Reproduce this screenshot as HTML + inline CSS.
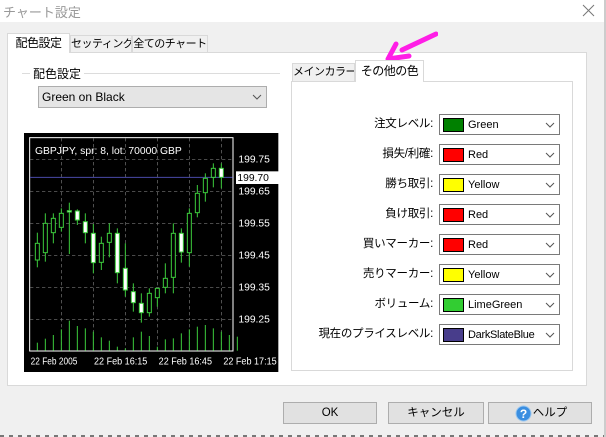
<!DOCTYPE html>
<html><head><meta charset="utf-8"><style>
*{margin:0;padding:0;box-sizing:border-box}
body{width:606px;height:437px;overflow:hidden;background:#f0f0f0;font-family:"Liberation Sans","Noto Sans CJK JP",sans-serif;font-size:12px;color:#000;position:relative}
.a{position:absolute;white-space:nowrap}
.tab{position:absolute;border:1px solid #d9d9d9;border-bottom:none;background:#f0f0f0;text-align:center;font-size:11px;line-height:18px;white-space:nowrap;overflow:hidden;letter-spacing:-0.5px}
.sel{background:#fff;z-index:2}
.lbl{position:absolute;right:173px;width:200px;text-align:right;font-size:11.5px;line-height:20px;white-space:nowrap;letter-spacing:-0.3px}
.cb{position:absolute;left:439px;width:121px;height:21px;border:1px solid #7a7a7a;background:#fff}
.cb .sw{position:absolute;left:3px;top:3px;width:21px;height:14px;border:1px solid #000}
.cb .t{position:absolute;left:28px;top:2px;font-size:11px;line-height:16px;white-space:nowrap}
.cb .ar{position:absolute;right:4px;top:5px;width:10px;height:10px}
.btn{position:absolute;top:402px;height:22px;background:#e1e1e1;border:1px solid #adadad;text-align:center;line-height:20px;font-size:11.5px;white-space:nowrap}
</style></head><body>
<div class="a" style="left:0;top:0;width:604px;height:22px;background:#fff"></div>
<div class="a" style="left:3px;top:2px;font-size:13px;color:#999">チャート設定</div>
<svg class="a" style="left:582px;top:4px" width="14" height="14"><path d="M1 1L12 12M12 1L1 12" stroke="#777" stroke-width="1"/></svg>
<div class="a" style="left:604px;top:0;width:2px;height:437px;background:#ccc"></div>

<div class="a" style="left:7px;top:52px;width:580px;height:334px;background:#fff;border:1px solid #d9d9d9"></div>
<div class="tab sel" style="left:7px;top:33px;width:63px;height:20px;font-size:12px">配色設定</div>
<div class="tab" style="left:70px;top:35px;width:62px;height:17px;line-height:16px">セッティング</div>
<div class="tab" style="left:132px;top:35px;width:76px;height:17px;line-height:16px">全てのチャート</div>

<div class="a" style="left:22px;top:73px;width:258px;height:1px;background:#dcdcdc"></div>
<div class="a" style="left:30px;top:65px;background:#fff;padding:0 3px;font-size:12px">配色設定</div>
<div class="a" style="left:38px;top:86px;width:229px;height:22px;background:#e5e5e5;border:1px solid #adadad;font-size:12px;line-height:20px;padding-left:3px">Green on Black</div>
<svg class="a" style="left:252px;top:93px" width="10" height="8"><path d="M1 2L5 6L9 2" stroke="#555" fill="none"/></svg>

<svg class="a" style="left:20px;top:130px" width="260" height="245" viewBox="0 0 780 735">
<rect x="12" y="9" width="763" height="717" fill="#000"/>
<rect x="29" y="23" width="610" height="640" fill="none" stroke="#fff" stroke-width="3"/>
<g stroke="#777" stroke-width="2" stroke-dasharray="10 8">
<line x1="30" y1="88" x2="638" y2="88"/><line x1="30" y1="184" x2="638" y2="184"/><line x1="30" y1="280" x2="638" y2="280"/><line x1="30" y1="376" x2="638" y2="376"/><line x1="30" y1="472" x2="638" y2="472"/><line x1="30" y1="568" x2="638" y2="568"/>
<line x1="124" y1="24" x2="124" y2="662"/><line x1="220" y1="24" x2="220" y2="662"/><line x1="316" y1="24" x2="316" y2="662"/><line x1="412" y1="24" x2="412" y2="662"/><line x1="508" y1="24" x2="508" y2="662"/><line x1="604" y1="24" x2="604" y2="662"/>
</g>
<line x1="30" y1="142" x2="638" y2="142" stroke="#4a4aa8" stroke-width="3"/>
<g fill="#fff" font-family="Liberation Sans,sans-serif" font-size="31">
<text x="45" y="72">GBPJPY, spr: 8, lot: 70000 GBP</text>
<text x="655" y="98">199.75</text><text x="655" y="194">199.65</text><text x="655" y="290">199.55</text><text x="655" y="386">199.45</text><text x="655" y="482">199.35</text><text x="655" y="578">199.25</text>
<text x="32" y="703" textLength="140" lengthAdjust="spacingAndGlyphs">22 Feb 2005</text><text x="222" y="703" textLength="160" lengthAdjust="spacingAndGlyphs">22 Feb 16:15</text><text x="416" y="703" textLength="160" lengthAdjust="spacingAndGlyphs">22 Feb 16:45</text><text x="610" y="703" textLength="160" lengthAdjust="spacingAndGlyphs">22 Feb 17:15</text>
</g>
<rect x="648" y="124" width="128" height="38" fill="#fff"/>
<text x="652" y="153" font-family="Liberation Sans,sans-serif" font-size="31" fill="#000">199.70</text>
<g stroke="#3ccc3c" stroke-width="3">
<line x1="52" y1="662" x2="52" y2="638"/><line x1="76" y1="662" x2="76" y2="626"/><line x1="100" y1="662" x2="100" y2="615"/><line x1="124" y1="662" x2="124" y2="598"/><line x1="148" y1="662" x2="148" y2="572"/><line x1="172" y1="662" x2="172" y2="588"/><line x1="196" y1="662" x2="196" y2="595"/><line x1="220" y1="662" x2="220" y2="605"/><line x1="244" y1="662" x2="244" y2="622"/><line x1="268" y1="662" x2="268" y2="632"/><line x1="292" y1="662" x2="292" y2="650"/><line x1="316" y1="662" x2="316" y2="655"/><line x1="340" y1="662" x2="340" y2="622"/><line x1="364" y1="662" x2="364" y2="605"/><line x1="388" y1="662" x2="388" y2="618"/><line x1="412" y1="662" x2="412" y2="650"/><line x1="436" y1="662" x2="436" y2="628"/><line x1="460" y1="662" x2="460" y2="625"/><line x1="484" y1="662" x2="484" y2="610"/><line x1="508" y1="662" x2="508" y2="598"/><line x1="532" y1="662" x2="532" y2="590"/><line x1="556" y1="662" x2="556" y2="585"/><line x1="580" y1="662" x2="580" y2="595"/><line x1="604" y1="662" x2="604" y2="605"/><line x1="628" y1="662" x2="628" y2="615"/><line x1="652" y1="662" x2="652" y2="620"/>
</g>
<g stroke="#3ccc3c" stroke-width="3">
<line x1="52" y1="308" x2="52" y2="412"/><rect x="46" y="340" width="12" height="50" fill="#000"/>
<line x1="76" y1="250" x2="76" y2="395"/><rect x="70" y="280" width="12" height="88" fill="#000"/>
<line x1="100" y1="250" x2="100" y2="340"/><rect x="94" y="265" width="12" height="43" fill="#000"/>
<line x1="124" y1="235" x2="124" y2="305"/><rect x="118" y="250" width="12" height="42" fill="#000"/>
<line x1="148" y1="218" x2="148" y2="372"/><rect x="142" y="242" width="12" height="4" fill="#fff"/>
<line x1="172" y1="238" x2="172" y2="285"/><rect x="166" y="243" width="12" height="27" fill="#fff"/>
<line x1="196" y1="250" x2="196" y2="340"/><rect x="190" y="275" width="12" height="33" fill="#fff"/>
<line x1="220" y1="282" x2="220" y2="430"/><rect x="214" y="310" width="12" height="88" fill="#fff"/>
<line x1="244" y1="320" x2="244" y2="420"/><rect x="238" y="340" width="12" height="57" fill="#000"/>
<line x1="268" y1="280" x2="268" y2="382"/><rect x="262" y="310" width="12" height="27" fill="#000"/>
<line x1="292" y1="295" x2="292" y2="460"/><rect x="286" y="310" width="12" height="118" fill="#fff"/>
<line x1="316" y1="340" x2="316" y2="500"/><rect x="310" y="415" width="12" height="65" fill="#fff"/>
<line x1="340" y1="460" x2="340" y2="545"/><rect x="334" y="485" width="12" height="33" fill="#fff"/>
<line x1="364" y1="490" x2="364" y2="578"/><rect x="358" y="520" width="12" height="28" fill="#fff"/>
<line x1="388" y1="475" x2="388" y2="560"/><rect x="382" y="490" width="12" height="58" fill="#000"/>
<line x1="412" y1="475" x2="412" y2="530"/><rect x="406" y="475" width="12" height="28" fill="#000"/>
<line x1="436" y1="400" x2="436" y2="490"/><rect x="430" y="445" width="12" height="27" fill="#000"/>
<line x1="460" y1="280" x2="460" y2="490"/><rect x="454" y="310" width="12" height="132" fill="#000"/>
<line x1="484" y1="295" x2="484" y2="398"/><rect x="478" y="310" width="12" height="56" fill="#fff"/>
<line x1="508" y1="235" x2="508" y2="410"/><rect x="502" y="250" width="12" height="118" fill="#000"/>
<line x1="532" y1="165" x2="532" y2="262"/><rect x="526" y="190" width="12" height="58" fill="#000"/>
<line x1="556" y1="130" x2="556" y2="215"/><rect x="550" y="145" width="12" height="43" fill="#000"/>
<line x1="580" y1="100" x2="580" y2="172"/><rect x="574" y="115" width="12" height="27" fill="#000"/>
<line x1="604" y1="100" x2="604" y2="175"/><rect x="598" y="115" width="12" height="27" fill="#fff"/>
</g>
</svg>

<div class="a" style="left:291px;top:81px;width:282px;height:290px;background:#fff;border:1px solid #d9d9d9"></div>
<div class="tab" style="left:292px;top:63px;width:63px;height:18px;line-height:17px">メインカラー</div>
<div class="tab sel" style="left:355px;top:60px;width:69px;height:22px;line-height:20px;font-size:12px">その他の色</div>
<svg class="a" style="left:384px;top:30px" width="54" height="34"><path d="M52 4L18 20M4 29L12 14M4 29L25 26" stroke="#ff1ee6" stroke-width="5" stroke-linecap="round" fill="none"/></svg>

<div class="lbl" style="top:114px">注文レベル:</div>
<div class="cb" style="top:114px"><div class="sw" style="background:#008000"></div><div class="t">Green</div><svg class="ar" viewBox="0 0 10 10"><path d="M1 3L5 7L9 3" stroke="#555" fill="none"/></svg></div>
<div class="lbl" style="top:144px">損失/利確:</div>
<div class="cb" style="top:144px"><div class="sw" style="background:#f00"></div><div class="t">Red</div><svg class="ar" viewBox="0 0 10 10"><path d="M1 3L5 7L9 3" stroke="#555" fill="none"/></svg></div>
<div class="lbl" style="top:174px">勝ち取引:</div>
<div class="cb" style="top:174px"><div class="sw" style="background:#ff0"></div><div class="t">Yellow</div><svg class="ar" viewBox="0 0 10 10"><path d="M1 3L5 7L9 3" stroke="#555" fill="none"/></svg></div>
<div class="lbl" style="top:204px">負け取引:</div>
<div class="cb" style="top:204px"><div class="sw" style="background:#f00"></div><div class="t">Red</div><svg class="ar" viewBox="0 0 10 10"><path d="M1 3L5 7L9 3" stroke="#555" fill="none"/></svg></div>
<div class="lbl" style="top:234px">買いマーカー:</div>
<div class="cb" style="top:234px"><div class="sw" style="background:#f00"></div><div class="t">Red</div><svg class="ar" viewBox="0 0 10 10"><path d="M1 3L5 7L9 3" stroke="#555" fill="none"/></svg></div>
<div class="lbl" style="top:264px">売りマーカー:</div>
<div class="cb" style="top:264px"><div class="sw" style="background:#ff0"></div><div class="t">Yellow</div><svg class="ar" viewBox="0 0 10 10"><path d="M1 3L5 7L9 3" stroke="#555" fill="none"/></svg></div>
<div class="lbl" style="top:294px">ボリューム:</div>
<div class="cb" style="top:294px"><div class="sw" style="background:#32cd32"></div><div class="t">LimeGreen</div><svg class="ar" viewBox="0 0 10 10"><path d="M1 3L5 7L9 3" stroke="#555" fill="none"/></svg></div>
<div class="lbl" style="top:324px">現在のプライスレベル:</div>
<div class="cb" style="top:324px"><div class="sw" style="background:#483d8b"></div><div class="t" style="letter-spacing:-0.3px">DarkSlateBlue</div><svg class="ar" viewBox="0 0 10 10"><path d="M1 3L5 7L9 3" stroke="#555" fill="none"/></svg></div>

<div class="btn" style="left:283px;width:94px">OK</div>
<div class="btn" style="left:388px;width:96px">キャンセル</div>
<div class="btn" style="left:488px;width:104px;padding-left:20px">ヘルプ</div>
<svg class="a" style="left:515px;top:405px" width="17" height="17"><circle cx="8.5" cy="8.5" r="7.5" fill="#3a8ee0" stroke="#9cc8f0"/><text x="8.5" y="13" text-anchor="middle" font-family="Liberation Sans,sans-serif" font-weight="bold" font-size="12" fill="#fff">?</text></svg>
<div class="a" style="left:0;top:435px;width:604px;height:2px;background:repeating-linear-gradient(90deg,#777 0 4px,#f0f0f0 4px 9px)"></div>
</body></html>
